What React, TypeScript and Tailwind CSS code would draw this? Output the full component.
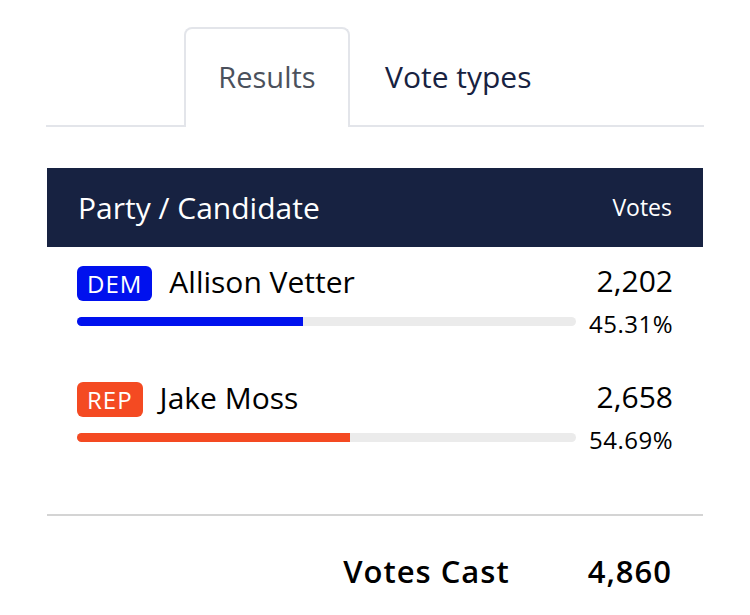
const font = { fontFamily: '"Open Sans", "Noto Sans", sans-serif' };

type Row = {
  party: string;
  badge: string;
  name: string;
  votes: string;
  pct: number;
};

const rows: Row[] = [
  { party: "DEM", badge: "bg-[#0011ee]", name: "Allison Vetter", votes: "2,202", pct: 45.31 },
  { party: "REP", badge: "bg-[#f44a22]", name: "Jake Moss", votes: "2,658", pct: 54.69 },
];

function CandidateRow({ row }: { row: Row }) {
  return (
    <div className="flex items-start gap-[7px]">
      <div className="flex-1">
        <div className="flex h-[35px] items-center">
          <span
            className={`${row.badge} flex h-[35px] items-center rounded-[6px] px-[10px] text-[24px] leading-none tracking-[1px] text-white`}
          >
            {row.party}
          </span>
          <span className="-mt-[4px] ml-[17px] text-[30px] leading-none text-black">{row.name}</span>
        </div>
        <div className="mt-[16px] h-[9px] w-[499px] overflow-hidden rounded-full bg-[#ebebeb]">
          <div className={`${row.badge} h-full`} style={{ width: `${row.pct}%` }} />
        </div>
      </div>
      <div className="flex flex-col items-end">
        <span className="text-[30px] leading-[30px] text-black">{row.votes}</span>
        <span className="mt-[15px] text-[24px] leading-[26px] tracking-[0.5px] text-black">
          {row.pct.toFixed(2)}%
        </span>
      </div>
    </div>
  );
}

export default function App() {
  return (
    <div className="h-[615px] w-[750px] bg-white pt-[27px]" style={font}>
      <div className="mx-[46px]">
        <div className="flex h-[100px] items-end border-b-2 border-[#e3e5ea]">
          <div className="relative -mb-[2px] ml-[138px] flex h-[100px] w-[166px] items-center justify-center rounded-t-[8px] border-2 border-b-0 border-[#e3e5ea] bg-white pb-[2px] text-[29px] text-[#4b515c]">
            Results
          </div>
          <div className="flex h-[98px] items-center pl-[35px] text-[30px] text-[#172241]">Vote types</div>
        </div>

        <div className="mx-px mt-[41px] flex h-[79px] items-center justify-between bg-[#172241] px-[31px] text-white">
          <span className="text-[30px]">Party / Candidate</span>
          <span className="text-[23px]">Votes</span>
        </div>

        <div className="mx-px flex flex-col gap-[45px] px-[30px] pt-[19px]">
          {rows.map((r) => (
            <CandidateRow key={r.party} row={r} />
          ))}
        </div>

        <div className="mx-px mt-[61px] border-t-2 border-[#d4d4d4]" />

        <div className="mx-px flex items-center justify-end gap-[78px] px-[31px] pt-[32px] text-[31px] leading-[46px] font-semibold tracking-[1px] text-black">
          <span>Votes Cast</span>
          <span>4,860</span>
        </div>
      </div>
    </div>
  );
}
